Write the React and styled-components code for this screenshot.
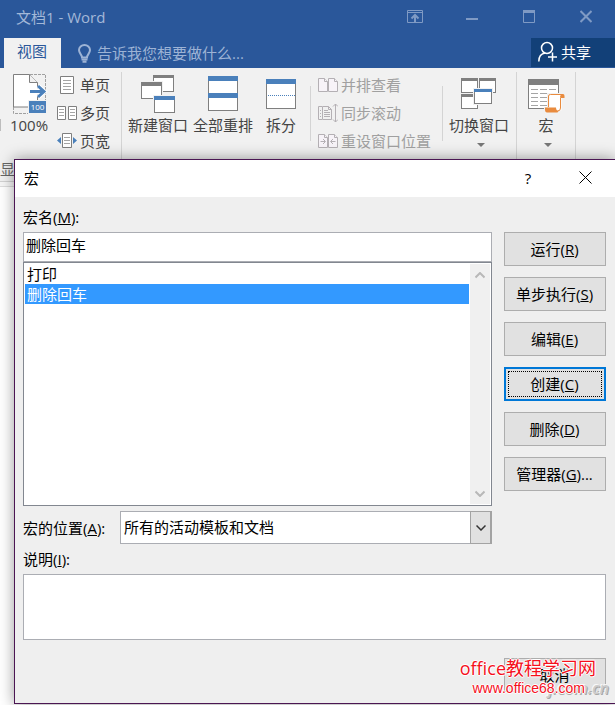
import React, { useState } from "react";
import styled, { createGlobalStyle } from "styled-components";

const GlobalStyle = createGlobalStyle`
  * {
    box-sizing: border-box;
  }
  body {
    margin: 0;
    background: #ffffff;
    overflow: hidden;
  }
  body, button, input, select, textarea {
    font-family: "Open Sans", "Noto Sans CJK SC", sans-serif;
    font-size: 15px;
    line-height: 20px;
  }
`;

const Page = styled.div`
  position: relative;
  min-height: 100vh;
`;

const TitleBar = styled.header`
  display: flex;
  align-items: center;
  justify-content: space-between;
  height: 38px;
  padding-left: 16px;
  background: #2a579a;
  color: #a3b8d8;
`;

const TitleText = styled.span`
  padding-bottom: 4px;
`;

const WindowControls = styled.div`
  display: flex;
  margin-right: 1px;
`;

const ControlButton = styled.button`
  display: flex;
  align-items: center;
  justify-content: center;
  width: 57px;
  height: 32px;
  padding: 0;
  margin-bottom: 6px;
  border: none;
  background: none;
  color: #7f9ac4;
`;

const TabBar = styled.nav`
  display: flex;
  align-items: stretch;
  height: 30px;
  padding-left: 4px;
  background: #2a579a;
`;

const Tab = styled.button`
  padding: 0 14px 4px 13px;
  border: none;
  background: #f1f1f1;
  color: #2a579a;
`;

const TellMe = styled.label`
  display: flex;
  flex: 1;
  align-items: center;
  gap: 6px;
  padding-left: 17px;
  color: #9db3d5;
`;

const TellMeInput = styled.input`
  flex: 1;
  min-width: 0;
  padding: 0 0 1px;
  border: none;
  outline: none;
  background: none;
  color: inherit;
  &::placeholder {
    color: #9db3d5;
    opacity: 1;
  }
`;

const ShareButton = styled.button`
  display: flex;
  align-items: center;
  gap: 3px;
  width: 84px;
  margin-bottom: 1px;
  padding: 0 0 2px 7px;
  border: none;
  background: #124078;
  color: #ffffff;
`;

const Ribbon = styled.section`
  border-bottom: 1px solid #d2d2d2;
  background: #f1f1f1;
`;

const RibbonTools = styled.div`
  display: flex;
  height: 91px;
`;

const RibbonGroup = styled.div`
  display: flex;
  flex: none;
  gap: 5px;
  padding: ${(props) => props.$padding || "0 6px"};
`;

const Divider = styled.div`
  flex: none;
  width: 1px;
  margin: ${(props) => (props.$short ? "18px 0" : "4px 0 0")};
  background: #d4d4d4;
`;

const ClippedLabel = styled.div`
  flex: none;
  align-self: flex-start;
  width: 1px;
  height: 12px;
  margin-top: 51px;
  background: #bdbdbd;
`;

const BigButton = styled.button`
  display: flex;
  flex-direction: column;
  align-items: center;
  justify-content: flex-start;
  min-width: 46px;
  padding: 4px 0 0;
  border: none;
  background: none;
  color: #444444;
  white-space: nowrap;
`;

const BigLabel = styled.span`
  margin-top: -1px;
`;

const DropArrow = styled.span`
  margin: 8px 0 0 4px;
  border: 4px solid transparent;
  border-top-color: #777777;
  border-bottom: none;
`;

const ToolList = styled.div`
  display: flex;
  flex-direction: column;
  padding-top: 3px;
`;

const ToolButton = styled.button`
  display: flex;
  align-items: center;
  gap: 3px;
  height: 28px;
  padding: 0;
  border: none;
  background: none;
  color: #444444;
  white-space: nowrap;
  &:disabled {
    color: #a0a0a0;
  }
`;

const GroupLabels = styled.div`
  height: 22px;
  color: #666666;
  line-height: 20px;
`;

const RibbonEdge = styled.div`
  height: 5px;
  border-bottom: 1px solid #dcdcdc;
  background: #f6f6f6;
`;

const Dialog = styled.section`
  position: absolute;
  top: 159px;
  left: 14px;
  right: 0;
  border: 1px solid #4b1653;
  border-right: none;
  background: #efefef;
  color: #000000;
  box-shadow: 0 0 14px rgba(0, 0, 0, 0.4);
`;

const DialogTitle = styled.header`
  display: flex;
  align-items: center;
  height: 37px;
  padding-left: 9px;
  background: #ffffff;
`;

const DialogHeading = styled.h1`
  flex: 1;
  margin: 0;
  padding-bottom: 2px;
  font-size: 15px;
  font-weight: 400;
`;

const DialogControl = styled.button`
  display: flex;
  align-items: center;
  justify-content: center;
  width: ${(props) => props.$width};
  height: 36px;
  padding: 0 0 2px;
  border: none;
  background: none;
`;

const DialogBody = styled.form`
  padding: 0 9px 11px 8px;
`;

const FieldLabel = styled.label`
  display: block;
  padding: ${(props) => props.$padding || "0"};
`;

const MacroArea = styled.div`
  display: grid;
  grid-template-columns: minmax(0, 1fr) 102px;
  column-gap: 12px;
`;

const MacroName = styled.input`
  display: block;
  width: 100%;
  height: 30px;
  padding: 0 2px 5px;
  border: 1px solid #abadb3;
  border-radius: 0;
  outline: none;
  background: #ffffff;
`;

const ListFrame = styled.div`
  display: flex;
  height: 244px;
  padding: 1px;
  border: 1px solid #828790;
  background: #ffffff;
`;

const MacroList = styled.ul`
  flex: 1;
  margin: 0;
  padding: 0;
  list-style: none;
`;

const MacroItem = styled.li`
  height: 20px;
  padding-left: 2px;
  background: ${(props) => (props.$selected ? "#3399ff" : "transparent")};
  color: ${(props) => (props.$selected ? "#ffffff" : "#000000")};
  cursor: default;
`;

const ScrollTrack = styled.div`
  display: flex;
  flex-direction: column;
  justify-content: space-between;
  width: 20px;
  margin-left: 1px;
  background: #f0f0f0;
`;

const ScrollButton = styled.button`
  display: flex;
  align-items: center;
  justify-content: center;
  height: 22px;
  padding: 0;
  border: none;
  background: none;
  color: #b8b8b8;
`;

const ActionColumn = styled.div`
  display: flex;
  flex-direction: column;
  gap: 11px;
`;

const ActionButton = styled.button`
  width: 102px;
  height: 34px;
  padding: 0 1px 1px 0;
  border: ${(props) => (props.$focused ? "2px solid #0078d7" : "1px solid #adadad")};
  outline: ${(props) => (props.$focused ? "1px dotted #000000" : "none")};
  outline-offset: -5px;
  border-radius: 0;
  background: #e1e1e1;
  color: #000000;
`;

const LocationRow = styled.div`
  display: flex;
  align-items: center;
  margin: 5px 114px 0 0;
`;

const LocationLabel = styled(FieldLabel)`
  flex: none;
  width: 97px;
  white-space: nowrap;
`;

const SelectWrap = styled.div`
  display: grid;
  grid-template-columns: minmax(0, 1fr) 22px;
  flex: 1;
  height: 33px;
`;

const LocationSelect = styled.select`
  grid-area: 1 / 1 / 2 / 3;
  width: 100%;
  padding: 0 24px 1px 3px;
  appearance: none;
  border: 1px solid #abadb3;
  border-radius: 0;
  outline: none;
  background: #ffffff;
  color: #000000;
`;

const SelectArrow = styled.span`
  display: flex;
  grid-area: 1 / 2 / 2 / 3;
  align-items: center;
  justify-content: center;
  border: 1px solid #a3a3a3;
  border-right-width: 2px;
  background: #e1e1e1;
  color: #333333;
  pointer-events: none;
`;

const Description = styled.textarea`
  display: block;
  width: 100%;
  height: 66px;
  border: 1px solid #abadb3;
  border-radius: 0;
  outline: none;
  resize: none;
  background: #ffffff;
`;

const DialogFooter = styled.footer`
  display: flex;
  justify-content: flex-end;
  padding-top: 18px;
`;

const Watermark = styled.div`
  position: absolute;
  right: 19px;
  bottom: 5px;
  display: flex;
  flex-direction: column;
  align-items: flex-end;
  color: #f5101c;
  text-shadow: 1px 0 #ffffff, -1px 0 #ffffff, 0 1px #ffffff, 0 -1px #ffffff;
  white-space: nowrap;
  pointer-events: none;
`;

const SiteName = styled.span`
  font-size: 18px;
  line-height: 20px;
`;

const SiteAddress = styled.span`
  padding-right: 11px;
  font-family: "Liberation Sans", sans-serif;
  font-size: 14px;
  line-height: 20px;
`;

const FaintMark = styled.span`
  position: absolute;
  right: 6px;
  bottom: 5px;
  color: #cccccc;
  font-size: 16px;
  font-style: italic;
  font-weight: 600;
  text-shadow: 1px 1px #a8a8a8, -1px -1px #f8f8f8;
  pointer-events: none;
`;

const BLUE = "#4a80bb";
const GRAY = "#7f7f7f";

function BigIcon({ children }) {
  return (
    <svg width="46" height="44" viewBox="0 0 46 44" fill="none" aria-hidden="true">
      {children}
    </svg>
  );
}

function MiniWindow({ x, y, w = 16, h = 15, bar = 3, color = GRAY }) {
  return (
    <g shapeRendering="crispEdges">
      <rect x={x - 1} y={y - 1} width={w + 2} height={h + 2} fill="#f1f1f1" />
      <rect x={x + 0.5} y={y + 0.5} width={w - 1} height={h - 1} fill="#ffffff" stroke={GRAY} />
      <rect x={x} y={y} width={w} height={bar} fill={color} />
    </g>
  );
}

function ZoomIcon() {
  return (
    <BigIcon>
      <path d="M24 2.500h15.500V29M7.500 35v6.500H22" stroke="#a0a0a0" strokeDasharray="3 1" />
      <path d="M7.500 2.500h16l8 8v24.500h-24z" fill="#ffffff" stroke={GRAY} />
      <path d="M23.500 2.500v8h8" fill="#f1f1f1" stroke={GRAY} />
      <path d="M24 19.500h13M32 14l6 5.500-6 5.500" stroke="#ffffff" strokeWidth="5" />
      <path d="M24 19.500h13M32 14l6 5.500-6 5.500" stroke={BLUE} strokeWidth="3" />
      <rect x="22" y="28" width="19" height="13" fill="#f1f1f1" />
      <rect x="23" y="29" width="17" height="12" fill={BLUE} />
      <text x="31.500" y="38" fill="#ffffff" fontSize="8" textAnchor="middle">100</text>
    </BigIcon>
  );
}

function NewWindowIcon() {
  return (
    <BigIcon>
      <MiniWindow x={18} y={3} w={21} h={17} />
      <MiniWindow x={6} y={10} w={21} h={17} bar={4} />
      <MiniWindow x={19} y={24} w={21} h={17} bar={4} color={BLUE} />
    </BigIcon>
  );
}

function ArrangeIcon() {
  return (
    <BigIcon>
      <rect x="8.500" y="4.500" width="29" height="34" fill="#ffffff" stroke={GRAY} />
      <path d="M8 6.500h30M8 23.500h30" stroke={BLUE} strokeWidth="5" />
    </BigIcon>
  );
}

function SplitIcon() {
  return (
    <BigIcon>
      <rect x="8.500" y="7.500" width="29" height="29" fill="#ffffff" stroke={GRAY} />
      <path d="M8 9.500h30" stroke={BLUE} strokeWidth="5" />
      <path d="M10 23.500h27" stroke={BLUE} strokeDasharray="1 1" />
    </BigIcon>
  );
}

function SwitchIcon() {
  return (
    <BigIcon>
      <MiniWindow x={5} y={6} w={17} />
      <MiniWindow x={23} y={6} w={17} />
      <MiniWindow x={5} y={22} w={17} />
      <MiniWindow x={18} y={17} w={18} color={BLUE} />
    </BigIcon>
  );
}

function MacroIcon() {
  return (
    <BigIcon>
      <rect x="5.500" y="7.500" width="30" height="29" fill="#ffffff" stroke={GRAY} />
      <path d="M5 10h31" stroke={GRAY} strokeWidth="6" />
      <path d="M8 17.500h25M8 21.500h25M8 25.500h25M8 29.500h25M8 33.500h25" stroke="#a5a5a5" strokeDasharray="7 2" />
      <path d="M24 21h18v6h-2v14H21v-6h3z" fill="#f1f1f1" />
      <path d="M26.500 22.500h12v16h-12z" fill="#ffffff" />
      <path d="M25.500 35V24q0-1.500 2-1.500h11q-1 1-1 3V36q0 3-3 3" stroke="#e98b3e" />
      <path d="M38 22h2q1.500 0 1.500 2v2H38zM22 35.500h11q0 3 2.500 3.500l-1 1.500H24q-2 0-2-3z" fill="#e98b3e" />
    </BigIcon>
  );
}

function SmallIcon({ children, color = GRAY, fill = "#ffffff" }) {
  return (
    <svg width="20" height="20" viewBox="0 0 20 20" fill={fill} stroke={color} aria-hidden="true">
      {children}
    </svg>
  );
}

function OnePageIcon() {
  return (
    <SmallIcon>
      <path d="M3.500 1.500h13v17h-13z" />
      <path d="M6 5.500h8M6 8.500h8M6 11.500h8M6 14.500h8" stroke="#a5a5a5" />
    </SmallIcon>
  );
}

function MultiPageIcon() {
  return (
    <SmallIcon>
      <path d="M.5 3.500h8v13h-8zM11.500 3.500h8v13h-8z" />
      <path d="M2 6.500h5M2 9.500h5M2 12.500h5M13 6.500h5M13 9.500h5M13 12.500h5" stroke="#a5a5a5" />
    </SmallIcon>
  );
}

function PageWidthIcon() {
  return (
    <SmallIcon>
      <path d="M5.500 2.500h9v14h-9z" />
      <path d="M7 6.500h6M7 9.500h6M7 12.500h6" stroke="#a5a5a5" />
      <path d="M4 6v7L0 9.500zM16 6v7l4-3.500z" fill={BLUE} stroke="none" />
    </SmallIcon>
  );
}

function SideBySideIcon() {
  return (
    <SmallIcon color="#b4b0b4" fill="#f7f3f8">
      <path d="M.5 3.500h6l3 3v10h-9zM10.500 3.500h6l3 3v10h-9z" />
      <path d="M6.500 3.500v3h3M16.500 3.500v3h3" />
    </SmallIcon>
  );
}

function SyncScrollIcon() {
  return (
    <SmallIcon color="#b4b0b4" fill="none">
      <path d="M4 3.500H.5v13H4M4.500 3.500h6l3 3v10h-9zM10.500 3.500v3h3" />
      <path d="M2 7.500h1M2 10.500h1M2 13.500h1M6 7.500h4M6 9.500h6M6 11.500h6M6 13.500h6" />
      <path d="M17.500 1v18M15 3.500L17.500 1 20 3.500M15 16.500l2.500 2.500 2.500-2.500" />
    </SmallIcon>
  );
}

function ResetPositionIcon() {
  return (
    <SmallIcon color="#b4b0b4" fill="#f7f3f8">
      <path d="M.5 3.500h6l3 3v10h-9zM10.500 3.500h6l3 3v10h-9z" />
      <path d="M6.500 3.500v3h3M16.500 3.500v3h3" />
      <path d="M2.500 10.500H7M5 8l2.500 2.500L5 13M17.500 10.500H13M15 8l-2.500 2.500L15 13" fill="none" />
    </SmallIcon>
  );
}

function Chevron({ up, stroke = 2 }) {
  return (
    <svg width="10" height="7" viewBox="0 0 10 7" fill="none" stroke="currentColor" strokeWidth={stroke} aria-hidden="true">
      <path d={up ? "M.5 5.500L5 1l4.500 4.500" : "M.5 1.500L5 6l4.500-4.500"} />
    </svg>
  );
}

const pageTools = [
  { label: "单页", Icon: OnePageIcon },
  { label: "多页", Icon: MultiPageIcon },
  { label: "页宽", Icon: PageWidthIcon },
];

const windowTools = [
  { label: "并排查看", Icon: SideBySideIcon },
  { label: "同步滚动", Icon: SyncScrollIcon },
  { label: "重设窗口位置", Icon: ResetPositionIcon },
];

const actions = [
  { label: "运行", hotkey: "R" },
  { label: "单步执行", hotkey: "S" },
  { label: "编辑", hotkey: "E" },
  { label: "创建", hotkey: "C", focused: true },
  { label: "删除", hotkey: "D" },
  { label: "管理器", hotkey: "G", suffix: "..." },
];

const macros = ["打印", "删除回车"];

function WordWindow() {
  return (
    <>
      <TitleBar>
        <TitleText>文档1 - Word</TitleText>
        <WindowControls>
          <ControlButton aria-label="功能区显示选项">
            <svg width="16" height="13" viewBox="0 0 16 13" fill="none" stroke="currentColor">
              <path d="M.5.5h15v12H.5zM.5 2.500h15" />
              <path d="M8 12V5M4.500 8.500L8 5l3.500 3.500" strokeWidth="2" />
            </svg>
          </ControlButton>
          <ControlButton aria-label="最小化">
            <svg width="12" height="13" viewBox="0 0 12 13" stroke="currentColor" strokeWidth="2">
              <path d="M0 9h12" />
            </svg>
          </ControlButton>
          <ControlButton aria-label="最大化">
            <svg width="12" height="13" viewBox="0 0 12 13" fill="none" stroke="currentColor">
              <path d="M.5.5h11v12H.5z" />
              <path d="M0 1.500h12" strokeWidth="3" />
            </svg>
          </ControlButton>
          <ControlButton aria-label="关闭">
            <svg width="12" height="13" viewBox="0 0 12 13" stroke="currentColor" strokeWidth="2">
              <path d="M.5 1l11 11M11.500 1L.5 12" />
            </svg>
          </ControlButton>
        </WindowControls>
      </TitleBar>
      <TabBar>
        <Tab>视图</Tab>
        <TellMe>
          <svg width="13" height="19" viewBox="0 0 13 19" fill="none" stroke="currentColor" strokeWidth="2" aria-hidden="true">
            <path d="M4 13.500c0-3-3-4-3-7.500a5.500 5 0 0 1 11 0c0 3.500-3 4.500-3 7.500z" />
            <path d="M3.500 15.500h6M4.500 17.800h4" />
          </svg>
          <TellMeInput placeholder="告诉我您想要做什么..." aria-label="告诉我您想要做什么" />
        </TellMe>
        <ShareButton>
          <svg width="20" height="21" viewBox="0 0 20 21" fill="none" stroke="currentColor" strokeWidth="1.500" aria-hidden="true">
            <circle cx="9" cy="7" r="5.500" />
            <path d="M.8 20.500c0-5 2.500-8 6.500-8.500M14.500 11.500v9M10 16h9" />
          </svg>
          共享
        </ShareButton>
      </TabBar>
      <Ribbon>
        <RibbonTools>
          <ClippedLabel />
          <RibbonGroup $padding="0 11px 0 5px">
            <BigButton>
              <ZoomIcon />
              <BigLabel>100%</BigLabel>
            </BigButton>
            <ToolList>
              {pageTools.map(({ label, Icon }) => (
                <ToolButton key={label}>
                  <Icon />
                  {label}
                </ToolButton>
              ))}
            </ToolList>
          </RibbonGroup>
          <Divider />
          <RibbonGroup>
            <BigButton>
              <NewWindowIcon />
              <BigLabel>新建窗口</BigLabel>
            </BigButton>
            <BigButton>
              <ArrangeIcon />
              <BigLabel>全部重排</BigLabel>
            </BigButton>
            <BigButton>
              <SplitIcon />
              <BigLabel>拆分</BigLabel>
            </BigButton>
          </RibbonGroup>
          <Divider $short />
          <RibbonGroup $padding="0 11px 0 7px">
            <ToolList>
              {windowTools.map(({ label, Icon }) => (
                <ToolButton key={label} disabled>
                  <Icon />
                  {label}
                </ToolButton>
              ))}
            </ToolList>
          </RibbonGroup>
          <Divider $short />
          <RibbonGroup $padding="0 7px 0 6px">
            <BigButton>
              <SwitchIcon />
              <BigLabel>切换窗口</BigLabel>
              <DropArrow />
            </BigButton>
          </RibbonGroup>
          <Divider />
          <RibbonGroup>
            <BigButton>
              <MacroIcon />
              <BigLabel>宏</BigLabel>
              <DropArrow />
            </BigButton>
          </RibbonGroup>
          <Divider />
        </RibbonTools>
        <GroupLabels>显</GroupLabels>
      </Ribbon>
      <RibbonEdge />
    </>
  );
}

function MacroDialog() {
  const [name, setName] = useState("删除回车");

  return (
    <Dialog role="dialog" aria-labelledby="macro-title">
      <DialogTitle>
        <DialogHeading id="macro-title">宏</DialogHeading>
        <DialogControl $width="54px" aria-label="帮助">?</DialogControl>
        <DialogControl $width="60px" aria-label="关闭">
          <svg width="13" height="13" viewBox="0 0 13 13" stroke="#000000">
            <path d="M.5.5l12 12M12.500.5l-12 12" />
          </svg>
        </DialogControl>
      </DialogTitle>
      <DialogBody onSubmit={(e) => e.preventDefault()}>
        <FieldLabel htmlFor="macro-name" $padding="10px 0 5px">
          宏名(<u>M</u>):
        </FieldLabel>
        <MacroArea>
          <div>
            <MacroName id="macro-name" value={name} onChange={(e) => setName(e.target.value)} />
            <ListFrame>
              <MacroList role="listbox" aria-label="宏名">
                {macros.map((macro) => (
                  <MacroItem
                    key={macro}
                    role="option"
                    aria-selected={macro === name}
                    $selected={macro === name}
                    onClick={() => setName(macro)}
                  >
                    {macro}
                  </MacroItem>
                ))}
              </MacroList>
              <ScrollTrack>
                <ScrollButton type="button" aria-label="向上">
                  <Chevron up />
                </ScrollButton>
                <ScrollButton type="button" aria-label="向下">
                  <Chevron />
                </ScrollButton>
              </ScrollTrack>
            </ListFrame>
          </div>
          <ActionColumn>
            {actions.map(({ label, hotkey, suffix, focused }) => (
              <ActionButton key={hotkey} type="button" $focused={focused}>
                {label}(<u>{hotkey}</u>){suffix}
              </ActionButton>
            ))}
          </ActionColumn>
        </MacroArea>
        <LocationRow>
          <LocationLabel htmlFor="macro-location">
            宏的位置(<u>A</u>):
          </LocationLabel>
          <SelectWrap>
            <LocationSelect id="macro-location">
              <option>所有的活动模板和文档</option>
            </LocationSelect>
            <SelectArrow>
              <Chevron stroke={1.5} />
            </SelectArrow>
          </SelectWrap>
        </LocationRow>
        <FieldLabel htmlFor="macro-description" $padding="5px 0">
          说明(<u>I</u>):
        </FieldLabel>
        <Description id="macro-description" />
        <DialogFooter>
          <ActionButton type="button">取消</ActionButton>
        </DialogFooter>
      </DialogBody>
      <FaintMark>j.com.cn</FaintMark>
      <Watermark>
        <SiteName>office教程学习网</SiteName>
        <SiteAddress>www.office68.com</SiteAddress>
      </Watermark>
    </Dialog>
  );
}

export default function App() {
  return (
    <>
      <GlobalStyle />
      <Page>
        <WordWindow />
        <MacroDialog />
      </Page>
    </>
  );
}
